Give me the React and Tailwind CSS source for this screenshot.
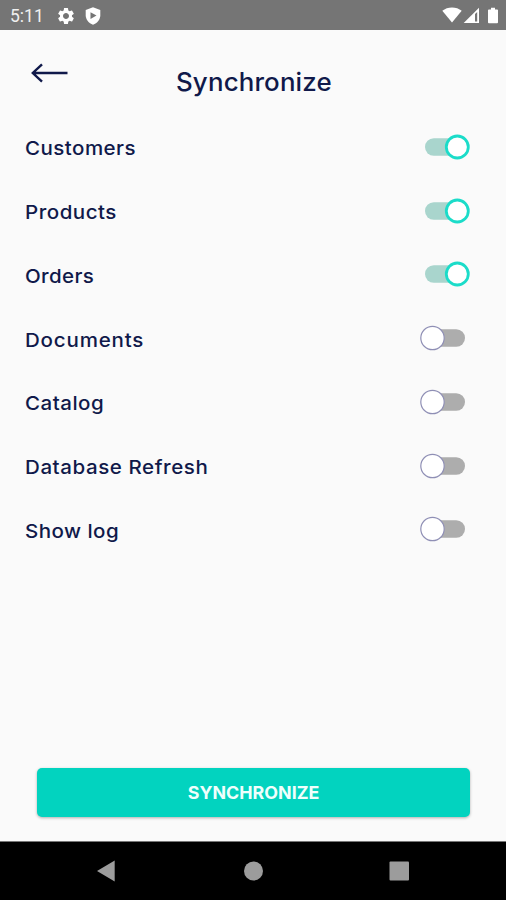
import React from 'react';
import { MdSettings } from 'react-icons/md';

const OPTIONS = [
  { label: 'Customers', on: true, tracking: 'tracking-[0.42px]' },
  { label: 'Products', on: true, tracking: 'tracking-[0.47px]' },
  { label: 'Orders', on: true, tracking: 'tracking-[0.35px]' },
  { label: 'Documents', on: false, tracking: 'tracking-[0.75px]' },
  { label: 'Catalog', on: false, tracking: 'tracking-[0.45px]' },
  { label: 'Database Refresh', on: false, tracking: 'tracking-[0.53px]' },
  { label: 'Show log', on: false, tracking: 'tracking-[0.43px]' },
];

const StatusBar = () => (
  <div className="h-[30px] shrink-0 bg-[#757575] flex items-center pl-[10px] pr-[7px] text-white">
    <span className="font-[Roboto] text-[17.5px] leading-none pt-[3px] w-[46px] text-[#f0f0f0]">5:11</span>
    <MdSettings className="size-[20px] mt-[1px]" />
    <svg viewBox="0 0 16 18" className="w-[16px] h-[18px] ml-[9px] mt-[1px]">
      <path d="M8 0.3 15.3 3v5.2c0 4.300-3 8-7.300 9.500C3.700 16.200.7 12.500.7 8.200V3z" fill="#fff" />
      <path d="M5.500 5.200 11.500 8.600 5.500 12z" fill="#757575" />
    </svg>
    <div className="ml-auto flex items-center">
      <svg viewBox="0 0 20 16" className="w-[20px] h-[16px]">
        <path d="M10 15.500.3 3.800C3 1.600 6.300.4 10 .4s7 1.200 9.700 3.400z" fill="#fff" />
      </svg>
      <svg viewBox="0 0 17 17" className="w-[17px] h-[17px] ml-px">
        <path d="M16 .7V16H.7z" fill="#fff" />
        <path d="M12 7v7.500h2.200V5z" fill="#757575" />
      </svg>
      <svg viewBox="0 0 11 17" className="w-[10px] h-[17px] ml-[8px] mr-px">
        <path d="M3.300 0h4.400v1.800H10a1 1 0 0 1 1 1V16a1 1 0 0 1-1 1H1a1 1 0 0 1-1-1V2.800a1 1 0 0 1 1-1h2.300z" fill="#fff" />
      </svg>
    </div>
  </div>
);

const Toggle = ({ on }) => (
  <svg viewBox="0 0 52 28" className="w-[52px] h-[28px]" role="switch" aria-checked={on}>
    {on ? (
      <>
        <rect x="6" y="5.300" width="40" height="17.500" rx="8.750" fill="#a9d5cd" />
        <circle cx="38.300" cy="14" r="11" fill="#fff" stroke="#1bdcc9" strokeWidth="2.800" />
      </>
    ) : (
      <>
        <rect x="8" y="5.300" width="38" height="17.500" rx="8.750" fill="#adadad" />
        <circle cx="13.500" cy="14" r="11.700" fill="#fff" stroke="#8f8fb5" strokeWidth="1.200" />
      </>
    )}
  </svg>
);

const NavBar = () => (
  <div className="h-[59px] shrink-0 bg-black border-t border-[#777] flex items-center">
    <svg viewBox="0 0 506 58" className="w-full h-[58px]" fill="#9c9c9c">
      <path d="M97 29 114.700 18.500v21z" />
      <circle cx="253.500" cy="29" r="9.500" />
      <rect x="389.500" y="19.500" width="19.500" height="19" rx="1" />
    </svg>
  </div>
);

const App = () => {
  return (
    <div className="w-[506px] h-[900px] bg-[#fafafa] flex flex-col overflow-hidden font-[Inter,sans-serif] text-[#10194a]">
      <StatusBar />

      {/* Header */}
      <header className="h-[85px] shrink-0 flex pl-[31px]">
        <svg viewBox="0 0 38 20" className="w-[38px] h-[20px] mt-[33px]" fill="none" stroke="currentColor" strokeWidth="2.400">
          <path d="M1.800 10H36.500M11 1.300 1.800 10 11 18.700" />
        </svg>
        <h1 className="ml-[107px] mt-[36px] text-[25px] leading-[32px] font-medium tracking-[0.150px] whitespace-nowrap origin-left scale-x-[1.035]">Synchronize</h1>
      </header>

      <main className="flex-1 flex flex-col">
        {OPTIONS.map(({ label, on, tracking }) => (
          <div key={label} className="h-[63.75px] pl-[25px] pr-[35px] flex items-center justify-between">
            <span className={`text-[19px] leading-[24px] font-medium pt-[5px] whitespace-nowrap origin-left scale-x-[1.08] ${tracking}`}>{label}</span>
            <Toggle on={on} />
          </div>
        ))}
      </main>

      <button className="h-[49px] shrink-0 ml-[37px] mr-[36px] mb-[24px] rounded-[5px] bg-[#02d3bf] shadow-[0_1px_3px_rgba(0,0,0,0.3)] text-[#effffc] text-[17.5px] font-bold flex items-center justify-center pt-px">
        <span className="scale-x-[1.02]">SYNCHRONIZE</span>
      </button>

      <NavBar />
    </div>
  );
};

export default App;
